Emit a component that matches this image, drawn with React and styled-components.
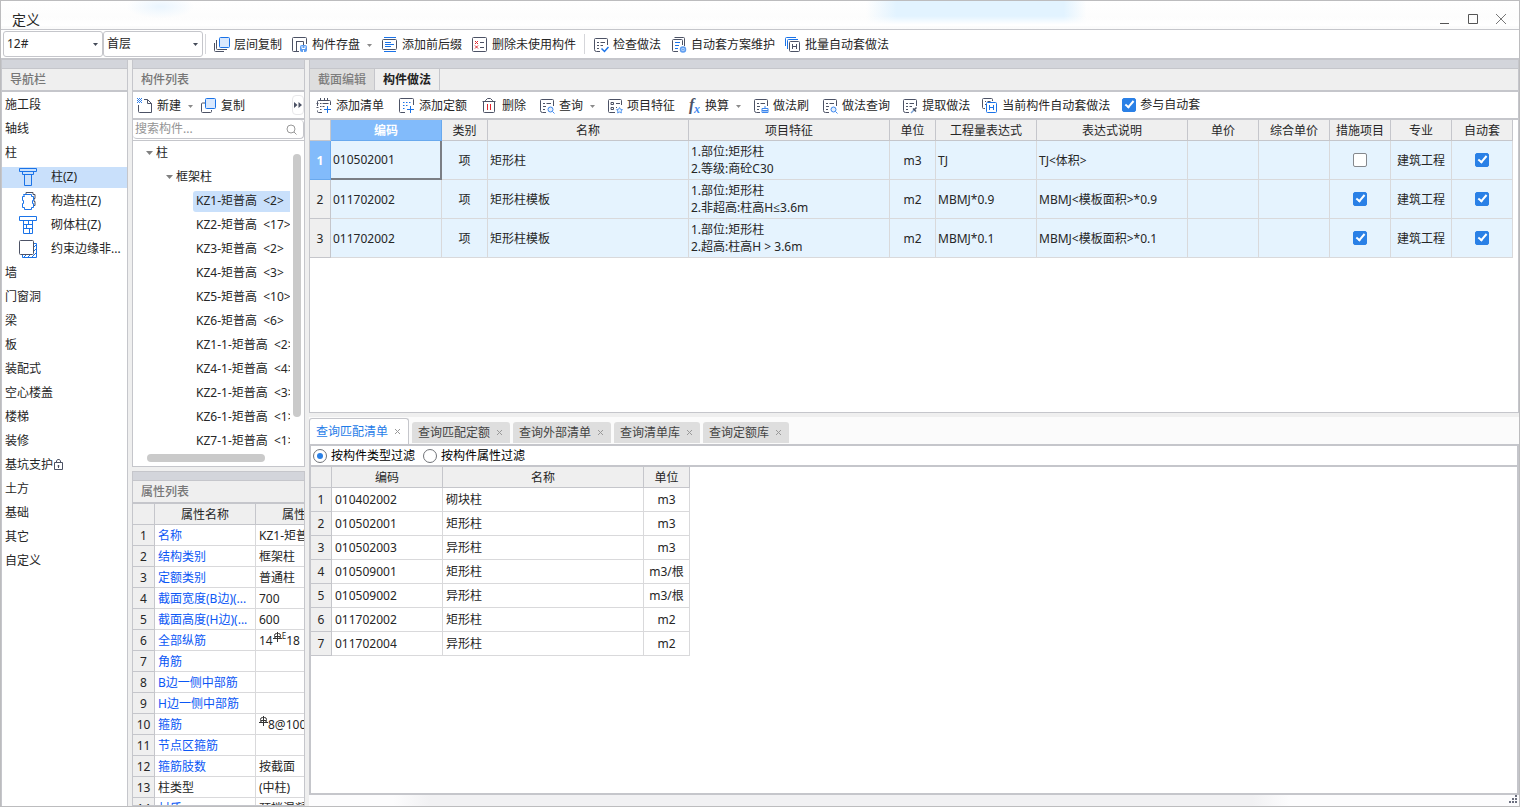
import React, { useState } from 'react';
import styled, { createGlobalStyle, css } from 'styled-components';

const GlobalStyle = createGlobalStyle`
  *, *::before, *::after {
    box-sizing: border-box;
  }

  body {
    margin: 0;
    color: #262626;
    background: #fff;
  }

  body, button, select, input {
    font-family: "Noto Sans", "Open Sans", "Noto Sans CJK SC", sans-serif;
    font-size: 12px;
    line-height: 16px;
  }
`;

const line = '#c5c6cb';
const ink = '#4c5265';
const blue = '#1a73e8';

/* ---------- window ---------- */

const Window = styled.div`
  display: flex;
  flex-direction: column;
  height: 100vh;
  border: 1px solid #bcbcbe;
  background: #efefef;
  overflow: hidden;
`;

const TitleBar = styled.header`
  display: flex;
  align-items: flex-end;
  justify-content: space-between;
  height: 29px;
  padding: 0 10px 0 11px;
  border-bottom: 1px solid ${line};
  background:
    radial-gradient(ellipse 34px 12px at 10.5% 20%, #eaf5fe, transparent),
    linear-gradient(transparent 60%, #fff 95%) top / 100% 25px no-repeat,
    linear-gradient(90deg, transparent 57%, #e2f3ff 59%, #e2f3ff 70%, transparent 71.5%) top / 100% 24px no-repeat,
    linear-gradient(#fff, #fbfbfb);
`;

const Title = styled.h1`
  margin: 0;
  font-size: 14px;
  font-weight: 400;
  line-height: 18px;
`;

const WindowButtons = styled.div`
  display: flex;
  gap: 12px;
  padding-bottom: 2px;
`;

const PlainButton = styled.button`
  display: flex;
  align-items: center;
  padding: 0;
  border: 0;
  background: none;
  color: inherit;
  white-space: nowrap;
`;

const ToolBar = styled.div`
  display: flex;
  flex: none;
  align-items: center;
  gap: 10px;
  height: 30px;
  padding: 0 2px;
  border-bottom: 2px solid ${line};
  background: #fff;
`;

const SelectGroup = styled.div`
  display: flex;
  align-items: center;
`;

const SelectBox = styled.label`
  display: grid;
  align-items: center;
  width: 100px;

  select, svg {
    grid-area: 1 / 1;
  }

  svg {
    justify-self: end;
    margin-right: 5px;
    pointer-events: none;
  }
`;

const Select = styled.select`
  appearance: none;
  width: 100%;
  height: 26px;
  padding: 0 3px;
  border: 1px solid ${line};
  border-radius: 3px;
  background: #fff;
  color: inherit;
`;

const Divider = styled.span`
  width: 1px;
  height: 20px;
  margin: 0 -2px 0 ${(p) => (p.$lead ? '2px' : '-2px')};
  background: #d5d6da;
`;

const ToolButton = styled(PlainButton)`
  gap: 4px;
  height: 22px;
  padding-top: 2px;

  svg:last-child:not(:first-child) {
    margin-left: 3px;
  }
`;

/* ---------- panels ---------- */

const Body = styled.div`
  display: flex;
  flex: 1;
  gap: 4px;
  min-height: 0;
`;

const NavColumn = styled.nav`
  display: flex;
  flex: 0 0 127px;
  flex-direction: column;
  border-right: 1px solid ${line};
  border-left: 1px solid ${line};
  background: #fff;
`;

const MiddleColumn = styled.div`
  display: flex;
  flex: 0 0 173px;
  flex-direction: column;
  gap: 4px;
  min-width: 0;
  min-height: 0;
`;

const MainColumn = styled.main`
  display: flex;
  flex: 1;
  flex-direction: column;
  min-width: 0;
`;

const Panel = styled.section`
  display: flex;
  flex: ${(p) => p.$grow} 1 0;
  flex-direction: column;
  min-height: 0;
  border: 1px solid ${line};
  border-top-width: ${(p) => (p.$topLine ? '1px' : '0')};
  background: #fff;
  overflow: hidden;
`;

const PanelGrip = styled.div`
  flex: none;
  height: 9px;
  border-bottom: 1px solid ${line};
  background: #d3d5db;
`;

const PanelTitle = styled.h2`
  flex: none;
  height: 23px;
  margin: 0;
  padding: 0 8px;
  border-bottom: 2px solid ${line};
  background: #efefef;
  color: #777;
  font-size: 12px;
  font-weight: 500;
  line-height: 22px;
`;

/* ---------- navigation ---------- */

const NavList = styled.ul`
  margin: 0;
  padding: 1px 0 0;
  list-style: none;
`;

const NavItem = styled.li`
  display: flex;
  align-items: center;
  height: 24px;
`;

const NavLink = styled.a`
  display: flex;
  align-items: center;
  width: 100%;
  height: 21px;
  gap: ${(p) => (p.$child ? '14px' : '1px')};
  padding-left: ${(p) => (p.$child ? '17px' : '3px')};
  background: ${(p) => (p.$active ? '#c9e0fb' : 'none')};
  color: inherit;
  text-decoration: none;
  white-space: nowrap;
`;

/* ---------- component tree ---------- */

const SmallBar = styled.div`
  display: flex;
  flex: none;
  align-items: center;
  gap: 8px;
  height: 28px;
  padding-left: 4px;
  border-bottom: 2px solid ${line};
`;

const MoreButton = styled(PlainButton)`
  justify-content: center;
  width: 12px;
  height: 20px;
  margin-left: auto;
  border: 1px solid #e8e8ea;
  border-radius: 4px;
`;

const SearchBox = styled.label`
  display: flex;
  flex: none;
  align-items: center;
  height: 19px;
  padding: 0 6px 0 2px;
  border: 1px solid ${line};
  border-width: 0 1px 1px 0;
  border-radius: 4px;
`;

const SearchInput = styled.input`
  flex: 1;
  min-width: 0;
  padding: 0;
  border: 0;
  outline: 0;
  background: none;

  &::placeholder {
    color: #949494;
  }
`;

const TreeArea = styled.div`
  display: grid;
  flex: 1;
  grid-template-columns: minmax(0, 1fr) 11px;
  grid-template-rows: minmax(0, 1fr) 12px;
  min-height: 0;
  margin-top: 1px;
  padding-right: 3px;
  border-top: 1px solid ${line};
`;

const TreeList = styled.ul`
  margin: 0;
  padding: 0;
  list-style: none;
  overflow: hidden;
`;

const TreeItem = styled.li`
  display: flex;
  align-items: center;
  gap: 3px;
  height: 24px;
  padding-left: ${(p) => p.$indent}px;
`;

const TreeLabel = styled.span`
  flex: 1;
  height: 21px;
  padding-left: ${(p) => (p.$leaf ? '3px' : '0')};
  border-radius: 3px 0 0 3px;
  background: ${(p) => (p.$active ? '#c9e0fb' : 'none')};
  line-height: 20px;
  white-space: pre;
`;

const ScrollTrack = styled.div`
  padding: ${(p) => (p.$horizontal ? '0 25px 0 14px' : '13px 0 37px 3px')};
`;

const ScrollThumb = styled.div`
  width: 100%;
  height: ${(p) => (p.$horizontal ? '8px' : '100%')};
  border-radius: 4px;
  background: #cacaca;
`;

/* ---------- tables ---------- */

const Scroller = styled.div`
  flex: 1;
  min-height: 0;
  overflow: hidden;
`;

const Table = styled.table`
  width: 0;
  table-layout: fixed;
  border-collapse: separate;
  border-spacing: 0;
`;

const cellBase = css`
  padding: 0 ${(p) => p.$pad || 2}px;
  border: 0 solid #d9d9db;
  border-width: 0 1px 1px 0;
  overflow: hidden;
  white-space: pre;
`;

const HeadCell = styled.th`
  ${cellBase}
  height: 21px;
  padding-top: 2px;
  border-color: ${line};
  background: #efefef;
  font-weight: 400;

  ${(p) => p.$active && css`
    border-color: #69a9ee;
    background: #82bbfb;
    color: #fff;
    font-weight: 700;
  `}
`;

const IndexCell = styled(HeadCell)`
  height: auto;
  padding: 1px 0 0;
`;

const Cell = styled.td`
  ${cellBase}
  height: ${(p) => p.$height}px;
  background: ${(p) => (p.$tint ? '#e5f3fe' : '#fff')};
  color: ${(p) => (p.$link ? '#0b57f5' : 'inherit')};
  text-align: ${(p) => p.$align || 'left'};
  line-height: 17px;

  ${(p) => p.$focus && css`
    border-right: 2px solid #7b7e84;
    border-bottom: 2px solid #7b7e84;
  `}
`;

const Rebar = styled.span`
  display: flex;
  align-items: flex-start;

  svg {
    flex: none;
  }

  sup {
    font-size: 8px;
    line-height: 8px;
  }
`;

/* ---------- controls ---------- */

const Checkbox = styled.input.attrs({ type: 'checkbox' })`
  display: grid;
  place-content: center;
  appearance: none;
  width: 14px;
  height: 14px;
  margin: 0 auto;
  border: 1px solid #85888d;
  border-radius: 2px;
  background: #fff;

  &:checked {
    border-color: #2a80e6;
    background: #2a80e6;
  }

  &:checked::before {
    content: '';
    width: 5px;
    height: 9px;
    margin-bottom: 3px;
    border: solid #fff;
    border-width: 0 2px 2px 0;
    transform: rotate(40deg);
  }
`;

const Radio = styled.input.attrs({ type: 'radio' })`
  display: grid;
  place-content: center;
  appearance: none;
  width: 14px;
  height: 14px;
  margin: 0;
  border: 1px solid #707378;
  border-radius: 50%;

  &:checked::before {
    content: '';
    width: 6px;
    height: 6px;
    border-radius: 50%;
    background: #2a80e6;
  }
`;

const CheckLabel = styled.label`
  display: flex;
  align-items: center;
  gap: 4px;
  white-space: nowrap;
`;

/* ---------- main area ---------- */

const TabStrip = styled.div`
  display: flex;
  flex: none;
  height: 23px;
  border-bottom: 2px solid ${line};
  background: #efefef;
`;

const Tab = styled.button`
  width: 65px;
  padding: 1px 0 0;
  border: 0;
  border-right: 1px solid ${line};
  background: ${(p) => (p.$active ? '#efefef' : '#dedede')};
  color: ${(p) => (p.$active ? '#222' : '#7d7d7d')};
  font-weight: ${(p) => (p.$active ? 700 : 500)};
`;

const ActionBar = styled(ToolBar)`
  gap: 13px;
  height: 28px;
  padding: 0 6px;
`;

const ActionGroup = styled.div`
  display: flex;
  align-items: center;
  gap: ${(p) => p.$gap}px;
`;

const QueryTabs = styled.div`
  display: flex;
  flex: none;
  align-items: center;
  gap: 3px;
  height: 29px;
  margin-top: 4px;
  border-bottom: 2px solid ${line};
  background: #fbfbfb;
`;

const QueryTab = styled.button`
  display: flex;
  align-items: center;
  gap: 7px;
  height: 21px;
  margin-top: 4px;
  padding: 0 8px 0 6px;
  border: 0;
  border-radius: 3px 3px 0 0;
  background: #dedede;
  color: #444;
  white-space: nowrap;

  ${(p) => p.$active && css`
    height: 26px;
    margin-top: 1px;
    border: 1px solid ${line};
    border-bottom: 0;
    background: #fff;
    color: #1f7ce8;
  `}
`;

const FilterRow = styled.div`
  display: flex;
  flex: none;
  align-items: center;
  gap: 8px;
  height: 21px;
  padding-left: 2px;
  border-bottom: 2px solid ${line};
  color: #000;
`;

const QueryPanel = styled(Panel)`
  border-width: 0 2px 2px;
`;

const StatusBar = styled.footer`
  display: flex;
  flex: none;
  justify-content: flex-end;
  height: 11px;
  padding-right: 2px;
  background: linear-gradient(90deg, #fcfcfd 7%, #f1f1f3 10%, #f1f1f3 78%, #fcfcfd 81%);
`;

/* ---------- icons ---------- */

const Svg = ({ w = 16, h = 16, children }) => (
  <svg width={w} height={h} viewBox={`0 0 ${w} ${h}`} fill="none" stroke={ink} aria-hidden="true">
    {children}
  </svg>
);

const Caret = ({ color = '#8a8a8a' }) => (
  <svg width="5" height="3" viewBox="0 0 5 3" aria-hidden="true">
    <path d="M0 0h5L2.5 3z" fill={color} />
  </svg>
);

const TreeCaret = () => (
  <svg width="7" height="4" viewBox="0 0 7 4" aria-hidden="true">
    <path d="M0 0h7L3.5 4z" fill="#808080" />
  </svg>
);

const Cross = () => (
  <svg width="5" height="5" viewBox="0 0 5 5" stroke="#999" aria-hidden="true">
    <path d="M0 0l5 5M5 0L0 5" />
  </svg>
);

const sheet = 'M7 14.5H3.5a2 2 0 0 1-2-2v-10a1 1 0 0 1 1-1h11a1 1 0 0 1 1 1V8';

const LayerCopyIcon = () => (
  <Svg>
    <rect x="5.5" y=".5" width="10" height="10" rx="1" fill="#d9e8fd" stroke={blue} />
    <path d="M2.500 3v8.500a1 1 0 0 0 1 1H13M.5 6v7.500a1 1 0 0 0 1 1H10" />
  </Svg>
);

const SaveIcon = () => (
  <Svg>
    <path d="M7 14.500H1.500a1 1 0 0 1-1-1v-12a1 1 0 0 1 1-1h12a1 1 0 0 1 1 1V7M4.500 4v10M4.500 4.500h7V8" />
    <rect x="8.5" y="8.5" width="6" height="6" rx="1" fill="#5d9df0" stroke="#5d9df0" />
    <path d="M10 9v2.500h3V9M11.500 13v2" stroke="#fff" />
  </Svg>
);

const PrefixIcon = () => (
  <Svg>
    <path d="M2 .5h12M2 14.500h12" stroke={blue} />
    <rect x=".5" y="2.5" width="14" height="10" rx="1" />
    <path d="M3 5.500h6M3 7.500h9M3 9.500h6" stroke={blue} />
  </Svg>
);

const UnusedIcon = () => (
  <Svg>
    <rect x=".5" y=".5" width="14" height="14" rx="1" />
    <path d="M3 4l3 3m0-3l-3 3M3 8.500l3 3m0-3l-3 3" stroke="#e0262e" />
    <path d="M8 5.500h4M8 10.500h4" />
  </Svg>
);

const CheckPlanIcon = () => (
  <Svg>
    <path d={sheet} />
    <path d="M4 5.500h2M7.500 5.500H12M4 8.500h2M7.500 8.500H10M4 11.500h2" />
    <path d="M8.500 11.500l3 3 4-4.500" stroke={blue} strokeWidth="1.5" />
  </Svg>
);

const SchemeIcon = () => (
  <Svg>
    <path d="M7 14.500H2.500a1 1 0 0 1-1-1v-10a1 1 0 0 1 1-1h8a1 1 0 0 1 1 1V8M3.500 .5h9a1 1 0 0 1 1 1V9" />
    <path d="M4 5.500h5M4 8.500h4M4 11.500h3" stroke={blue} />
    <circle cx="12" cy="12.5" r="2.5" fill="#cfe1fb" stroke="#5d9df0" strokeWidth="1.5" />
    <circle cx="12" cy="12.5" r=".7" stroke="#5d9df0" />
  </Svg>
);

const BatchIcon = () => (
  <Svg>
    <path d="M.5 9V1.500a1 1 0 0 1 1-1H11" stroke={blue} />
    <path d="M2.500 12V3.500a1 1 0 0 1 1-1H13" stroke={blue} />
    <rect x="4.5" y="4.5" width="10" height="10" rx="1" fill="#fff" />
    <path d="M7.500 7v5M11.500 7v5M7.500 9.500h4" />
  </Svg>
);

const NewIcon = () => (
  <Svg>
    <path d="M1.500 7v6.500a1 1 0 0 0 1 1h12V5.500L10.500 1.500H7M10.500 1.500v4h4" />
    <path d="M0 .5h5M0 2.500h5M0 4.500h5" stroke="#2f7fea" strokeDasharray="1 1" />
    <path d="M1 1.500h4M1 3.500h4" stroke="#2f7fea" strokeDasharray="1 1" />
  </Svg>
);

const CopyIcon = () => (
  <Svg>
    <path d="M10.500 12v1.500a1 1 0 0 1-1 1h-8a1 1 0 0 1-1-1V6a1 1 0 0 1 1-1H4" />
    <rect x="4.5" y=".5" width="10" height="10" rx="1" fill="#d9e8fd" stroke={blue} />
  </Svg>
);

const AddListIcon = () => (
  <Svg>
    <path d="M6 14.500H2.500a1 1 0 0 1-1-1v-1M.5 5.500h2M.5 9.500h2M1.500 8V3.500a1 1 0 0 1 1-1h11a1 1 0 0 1 1 1V7M4.500 0v3M8.500 0v3M11.500 0v3" />
    <path d="M4 5.500h1.500M6.500 5.500h6M4 8.500h1.500M6.500 8.500h2M4 11.500h1.500" />
    <path d="M11.500 8v7M8 11.500h7" stroke={blue} />
  </Svg>
);

const AddQuotaIcon = () => (
  <Svg>
    <path d="M6 14.500H1.500a1 1 0 0 1-1-1v-12a1 1 0 0 1 1-1h12a1 1 0 0 1 1 1V7" />
    <path d="M4 4.500h8M4 7.500h6M4 10.500h3" stroke={blue} strokeDasharray="1.5 1.5" />
    <path d="M11.500 8v7M8 11.500h7" stroke={blue} />
  </Svg>
);

const TrashIcon = () => (
  <Svg>
    <path d="M.5 3.500h13M1.500 4v9.500a1 1 0 0 0 1 1h9a1 1 0 0 0 1-1V4M3.500 3.500v-1l2-2h3l2 2v1" />
    <path d="M5.500 6v6M8.500 6v6" stroke="#e0262e" />
  </Svg>
);

const QueryIcon = () => (
  <Svg>
    <path d={sheet} />
    <path d="M4 5.500h2M7.500 5.500H12M4 8.500h3M4 11.500h2" />
    <circle cx="11.5" cy="11.5" r="2.5" stroke="#3c87ee" fill="#e4effd" />
    <path d="M13.500 13.500l2 2" stroke="#3c87ee" />
  </Svg>
);

const FeatureIcon = () => (
  <Svg>
    <path d="M8 14.500H2.500a1 1 0 0 1-1-1v-11a1 1 0 0 1 1-1h11a1 1 0 0 1 1 1V7" />
    <path d="M4 4.500h2.500v2H4zM4 9.500h2.500v2H4zM9 5.500h4M9 9.500h1" />
    <path d="M12.500 9.500l1 1.800 2 .3-1.400 1.400.3 2-1.900-.9-1.900.9.3-2-1.400-1.400 2-.3z" stroke="#5d9df0" fill="#e4effd" />
  </Svg>
);

const FormulaIcon = () => (
  <svg width="14" height="16" viewBox="0 0 14 16" fontFamily="Liberation Serif, serif" fontStyle="italic" fontWeight="700" aria-hidden="true">
    <text x="2" y="12" fontSize="16" fill={ink}>f</text>
    <text x="7" y="15" fontSize="12" fill="#3c87ee">x</text>
  </svg>
);

const BrushIcon = () => (
  <Svg>
    <path d={sheet} />
    <path d="M4 5.500h2M7.500 5.500H12M4 8.500h3M4 11.500h2" />
    <path d="M9 10.500h6v4H9zM12 8v3M9 12.500h6M11 12.500v2M13 12.500v2" stroke="#3c87ee" />
  </Svg>
);

const ExtractIcon = () => (
  <Svg>
    <path d={sheet} />
    <path d="M4 5.500h2M7.500 5.500H12M4 8.500h2M7.500 8.500H10M4 11.500h2" />
    <path d="M9 15l4-4" stroke="#7ba3d6" strokeWidth="1.5" />
    <path d="M11 10.500l3 3M12.500 11.500l2-2" strokeWidth="1.5" />
  </Svg>
);

const CurrentIcon = () => (
  <Svg>
    <path d="M3 10.500h-1.500a1 1 0 0 1-1-1v-8a1 1 0 0 1 1-1h8a1 1 0 0 1 1 1V3M3 3.500h1M5.500 3.500h3M3 6.500h1" />
    <rect x="4.5" y="4.5" width="10" height="10" rx="1" fill="#fff" stroke={blue} />
    <path d="M7.500 7v5M11.500 7v5M7.500 9.500h4" stroke={blue} />
  </Svg>
);

const MoreIcon = () => (
  <svg width="8" height="6" viewBox="0 0 8 6" aria-hidden="true">
    <path d="M0 0l3.500 3L0 6zM4.500 0L8 3 4.500 6z" fill={ink} />
  </svg>
);

const SearchIcon = () => (
  <Svg w={11} h={11}>
    <circle cx="5" cy="5" r="4" stroke="#999" />
    <path d="M8 8l2.500 2.500" stroke="#999" />
  </Svg>
);

const ColumnIcon = () => (
  <Svg w={18} h={18}>
    <path d="M.5 .5h17v3H.5zM3.500 3.500h11v3h-11zM5.500 6.500h7v11h-7z" stroke={blue} />
  </Svg>
);

const TieColumnIcon = () => (
  <Svg w={18} h={18}>
    <path d="M7 2V.5h7v2h2v4h-1v3h1v4h-2" />
    <path d="M4.500 2.500h8v2h2v4h-1v3h1v4h-2v2h-7v-2h-2v-4h1v-3h-1v-4h2z" stroke={blue} fill="#fff" />
  </Svg>
);

const MasonryIcon = () => (
  <Svg w={18} h={18}>
    <path d="M.5 .5h17v4H.5zM4.500 4.500h9v13h-9zM4.500 8.500h9M4.500 12.500h9M9.500 5v3.500M7.500 8.500v4M10.500 12.500v5" stroke={blue} />
  </Svg>
);

const EdgeColumnIcon = () => (
  <Svg w={18} h={18}>
    <path d="M3.500 15v2.500h14V3.500H15" stroke={blue} />
    <path d="M5 17l2-2M9 17l2-2M13 17l4-4M15 11l2-2M15 7l2-2" stroke={blue} />
    <rect x=".5" y=".5" width="14" height="14" rx="1" fill="#fff" />
  </Svg>
);

const LockIcon = () => (
  <Svg w={10} h={12}>
    <path d="M.5 3.500h8v7h-8zM2.500 3.500V2l1-1.500h2l1 1.500v1.500" />
    <path d="M4.500 6v3M3.500 7h2" />
  </Svg>
);

const RebarIcon = () => (
  <Svg w={9} h={10}>
    <path d="M4.500 0v10M0 6.500h9M2 4.500h5" stroke="#333" />
    <rect x="1.5" y="1.5" width="6" height="5" rx="2" stroke="#333" />
  </Svg>
);

const ResizeGrip = () => (
  <svg width="8" height="8" viewBox="0 0 8 8" fill="#6c7080" aria-hidden="true">
    <path d="M6 0h2v2H6zM3 3h2v2H3zM6 3h2v2H6zM0 6h2v2H0zM3 6h2v2H3zM6 6h2v2H6z" />
  </svg>
);

/* ---------- data ---------- */

const navItems = [
  { label: '施工段' },
  { label: '轴线' },
  { label: '柱' },
  { label: '柱(Z)', icon: <ColumnIcon />, active: true },
  { label: '构造柱(Z)', icon: <TieColumnIcon /> },
  { label: '砌体柱(Z)', icon: <MasonryIcon /> },
  { label: '约束边缘非...', icon: <EdgeColumnIcon /> },
  { label: '墙' },
  { label: '门窗洞' },
  { label: '梁' },
  { label: '板' },
  { label: '装配式' },
  { label: '空心楼盖' },
  { label: '楼梯' },
  { label: '装修' },
  { label: '基坑支护', locked: true },
  { label: '土方' },
  { label: '基础' },
  { label: '其它' },
  { label: '自定义' },
];

const treeItems = [
  'KZ1-矩普高  <2>',
  'KZ2-矩普高  <17>',
  'KZ3-矩普高  <2>',
  'KZ4-矩普高  <3>',
  'KZ5-矩普高  <10>',
  'KZ6-矩普高  <6>',
  'KZ1-1-矩普高  <2>',
  'KZ4-1-矩普高  <4>',
  'KZ2-1-矩普高  <3>',
  'KZ6-1-矩普高  <1>',
  'KZ7-1-矩普高  <1>',
];

const properties = [
  ['名称', 'KZ1-矩普高'],
  ['结构类别', '框架柱'],
  ['定额类别', '普通柱'],
  ['截面宽度(B边)(...', '700'],
  ['截面高度(H边)(...', '600'],
  ['全部纵筋', <Rebar key="v">14<RebarIcon /><sup>E</sup>18</Rebar>],
  ['角筋', ''],
  ['B边一侧中部筋', ''],
  ['H边一侧中部筋', ''],
  ['箍筋', <Rebar key="v"><RebarIcon />8@100</Rebar>],
  ['节点区箍筋', ''],
  ['箍筋肢数', '按截面'],
  ['柱类型', '(中柱)'],
  ['材质', '预拌混凝土'],
];

const gridColumns = [
  ['编码', 111],
  ['类别', 46],
  ['名称', 201],
  ['项目特征', 201],
  ['单位', 46],
  ['工程量表达式', 101],
  ['表达式说明', 151],
  ['单价', 71],
  ['综合单价', 71],
  ['措施项目', 61],
  ['专业', 61],
  ['自动套', 61],
];

const gridRows = [
  { code: '010502001', name: '矩形柱', feature: '1.部位:矩形柱\n2.等级:商砼C30', unit: 'm3', expr: 'TJ', note: 'TJ<体积>', measure: false },
  { code: '011702002', name: '矩形柱模板', feature: '1.部位:矩形柱\n2.非超高:柱高H≤3.6m', unit: 'm2', expr: 'MBMJ*0.9', note: 'MBMJ<模板面积>*0.9', measure: true },
  { code: '011702002', name: '矩形柱模板', feature: '1.部位:矩形柱\n2.超高:柱高H > 3.6m', unit: 'm2', expr: 'MBMJ*0.1', note: 'MBMJ<模板面积>*0.1', measure: true },
];

const queryRows = [
  ['010402002', '砌块柱', 'm3'],
  ['010502001', '矩形柱', 'm3'],
  ['010502003', '异形柱', 'm3'],
  ['010509001', '矩形柱', 'm3/根'],
  ['010509002', '异形柱', 'm3/根'],
  ['011702002', '矩形柱', 'm2'],
  ['011702004', '异形柱', 'm2'],
];

const queryTabs = ['查询匹配清单', '查询匹配定额', '查询外部清单', '查询清单库', '查询定额库'];

/* ---------- components ---------- */

const Columns = ({ widths }) => (
  <colgroup>
    {widths.map((w, i) => <col key={i} width={w} />)}
  </colgroup>
);

const Tool = ({ icon, label, menu }) => (
  <ToolButton type="button">
    {icon}
    {label}
    {menu && <Caret />}
  </ToolButton>
);

const Combo = ({ label, value }) => (
  <SelectBox>
    <Select aria-label={label} defaultValue={value}>
      <option>{value}</option>
    </Select>
    <Caret color="#444a58" />
  </SelectBox>
);

const Navigation = () => (
  <NavColumn>
    <PanelGrip />
    <PanelTitle>导航栏</PanelTitle>
    <NavList>
      {navItems.map((item) => (
        <NavItem key={item.label}>
          <NavLink href="#" $child={!!item.icon} $active={item.active}>
            {item.icon}
            {item.label}
            {item.locked && <LockIcon />}
          </NavLink>
        </NavItem>
      ))}
    </NavList>
  </NavColumn>
);

const ComponentList = () => (
  <Panel $grow={407}>
    <PanelGrip />
    <PanelTitle>构件列表</PanelTitle>
    <SmallBar>
      <Tool icon={<NewIcon />} label="新建" menu />
      <Tool icon={<CopyIcon />} label="复制" />
      <MoreButton type="button" aria-label="更多"><MoreIcon /></MoreButton>
    </SmallBar>
    <SearchBox>
      <SearchInput type="text" placeholder="搜索构件..." />
      <SearchIcon />
    </SearchBox>
    <TreeArea>
      <TreeList>
        <TreeItem $indent={13}><TreeCaret /><TreeLabel>柱</TreeLabel></TreeItem>
        <TreeItem $indent={33}><TreeCaret /><TreeLabel>框架柱</TreeLabel></TreeItem>
        {treeItems.map((text, i) => (
          <TreeItem key={text} $indent={60}>
            <TreeLabel $leaf $active={i === 0}>{text}</TreeLabel>
          </TreeItem>
        ))}
      </TreeList>
      <ScrollTrack><ScrollThumb /></ScrollTrack>
      <ScrollTrack $horizontal><ScrollThumb $horizontal /></ScrollTrack>
    </TreeArea>
  </Panel>
);

const PropertyList = () => (
  <Panel $grow={333} $topLine>
    <PanelGrip />
    <PanelTitle>属性列表</PanelTitle>
    <Scroller>
      <Table>
        <Columns widths={[22, 101, 89]} />
        <thead>
          <tr>
            <HeadCell />
            <HeadCell>属性名称</HeadCell>
            <HeadCell>属性值</HeadCell>
          </tr>
        </thead>
        <tbody>
          {properties.map(([name, value], i) => (
            <tr key={name}>
              <IndexCell scope="row">{i + 1}</IndexCell>
              <Cell $height={21} $pad={3} $link={name !== '柱类型'}>{name}</Cell>
              <Cell $height={21} $pad={3}>{value}</Cell>
            </tr>
          ))}
        </tbody>
      </Table>
    </Scroller>
  </Panel>
);

const MethodGrid = () => (
  <Scroller>
    <Table>
      <Columns widths={[21, ...gridColumns.map((c) => c[1])]} />
      <thead>
        <tr>
          <HeadCell />
          {gridColumns.map(([label], i) => (
            <HeadCell key={label} $active={i === 0}>{label}</HeadCell>
          ))}
        </tr>
      </thead>
      <tbody>
        {gridRows.map((row, i) => (
          <tr key={i}>
            <IndexCell scope="row" $active={i === 0}>{i + 1}</IndexCell>
            <Cell $height={39} $tint $focus={i === 0}>{row.code}</Cell>
            <Cell $tint $align="center">项</Cell>
            <Cell $tint>{row.name}</Cell>
            <Cell $tint>{row.feature}</Cell>
            <Cell $tint $align="center">{row.unit}</Cell>
            <Cell $tint>{row.expr}</Cell>
            <Cell $tint>{row.note}</Cell>
            <Cell $tint />
            <Cell $tint />
            <Cell $tint $align="center">
              <Checkbox aria-label="措施项目" defaultChecked={row.measure} />
            </Cell>
            <Cell $tint $align="center">建筑工程</Cell>
            <Cell $tint $align="center">
              <Checkbox aria-label="自动套" defaultChecked />
            </Cell>
          </tr>
        ))}
      </tbody>
    </Table>
  </Scroller>
);

const QueryTable = () => (
  <Scroller>
    <Table>
      <Columns widths={[21, 111, 201, 46]} />
      <thead>
        <tr>
          <HeadCell />
          <HeadCell>编码</HeadCell>
          <HeadCell>名称</HeadCell>
          <HeadCell>单位</HeadCell>
        </tr>
      </thead>
      <tbody>
        {queryRows.map(([code, name, unit], i) => (
          <tr key={code}>
            <IndexCell scope="row">{i + 1}</IndexCell>
            <Cell $height={24} $pad={3}>{code}</Cell>
            <Cell $pad={3}>{name}</Cell>
            <Cell $align="center">{unit}</Cell>
          </tr>
        ))}
      </tbody>
    </Table>
  </Scroller>
);

const App = () => {
  const [tab, setTab] = useState(0);

  return (
    <Window>
      <GlobalStyle />
      <TitleBar>
        <Title>定义</Title>
        <WindowButtons>
          <PlainButton type="button" aria-label="最小化">
            <Svg><path d="M3 12.500h9" stroke="#555" /></Svg>
          </PlainButton>
          <PlainButton type="button" aria-label="最大化">
            <Svg><path d="M3.500 3.500h9v9h-9z" stroke="#555" /></Svg>
          </PlainButton>
          <PlainButton type="button" aria-label="关闭">
            <Svg><path d="M3 3l10 10M13 3L3 13" stroke="#777" /></Svg>
          </PlainButton>
        </WindowButtons>
      </TitleBar>

      <ToolBar>
        <SelectGroup>
          <Combo label="楼栋" value="12#" />
          <Combo label="楼层" value="首层" />
          <Divider $lead />
        </SelectGroup>
        <Tool icon={<LayerCopyIcon />} label="层间复制" />
        <Tool icon={<SaveIcon />} label="构件存盘" menu />
        <Tool icon={<PrefixIcon />} label="添加前后缀" />
        <Tool icon={<UnusedIcon />} label="删除未使用构件" />
        <Divider />
        <Tool icon={<CheckPlanIcon />} label="检查做法" />
        <Tool icon={<SchemeIcon />} label="自动套方案维护" />
        <Tool icon={<BatchIcon />} label="批量自动套做法" />
      </ToolBar>

      <Body>
        <Navigation />

        <MiddleColumn>
          <ComponentList />
          <PropertyList />
        </MiddleColumn>

        <MainColumn>
          <Panel $grow={354}>
            <PanelGrip />
            <TabStrip>
              <Tab type="button">截面编辑</Tab>
              <Tab type="button" $active>构件做法</Tab>
            </TabStrip>
            <ActionBar>
              <ActionGroup $gap={15}>
                <Tool icon={<AddListIcon />} label="添加清单" />
                <Tool icon={<AddQuotaIcon />} label="添加定额" />
                <Tool icon={<TrashIcon />} label="删除" />
              </ActionGroup>
              <ActionGroup $gap={12}>
                <Tool icon={<QueryIcon />} label="查询" menu />
                <Tool icon={<FeatureIcon />} label="项目特征" />
                <Tool icon={<FormulaIcon />} label="换算" menu />
                <Tool icon={<BrushIcon />} label="做法刷" />
              </ActionGroup>
              <ActionGroup $gap={12}>
                <Tool icon={<QueryIcon />} label="做法查询" />
                <Tool icon={<ExtractIcon />} label="提取做法" />
                <Tool icon={<CurrentIcon />} label="当前构件自动套做法" />
                <CheckLabel><Checkbox defaultChecked />参与自动套</CheckLabel>
              </ActionGroup>
            </ActionBar>
            <MethodGrid />
          </Panel>

          <QueryTabs>
            {queryTabs.map((label, i) => (
              <QueryTab key={label} type="button" $active={i === tab} onClick={() => setTab(i)}>
                {label}
                <Cross />
              </QueryTab>
            ))}
          </QueryTabs>
          <QueryPanel $grow={348}>
            <FilterRow>
              <CheckLabel><Radio name="filter" defaultChecked />按构件类型过滤</CheckLabel>
              <CheckLabel><Radio name="filter" />按构件属性过滤</CheckLabel>
            </FilterRow>
            <QueryTable />
          </QueryPanel>
          <StatusBar><ResizeGrip /></StatusBar>
        </MainColumn>
      </Body>
    </Window>
  );
};

export default App;
